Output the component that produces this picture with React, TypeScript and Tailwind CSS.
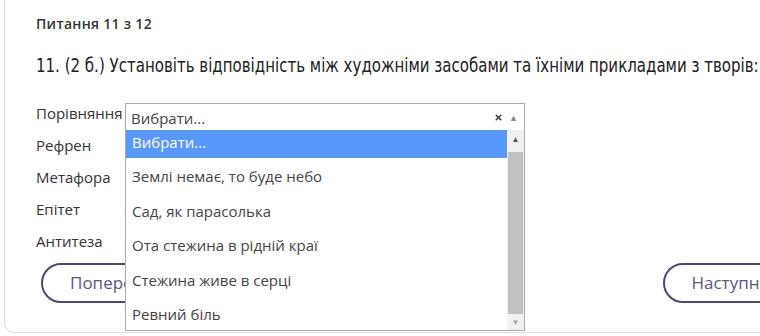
import { X } from "lucide-react"

const labels = ["Порівняння", "Рефрен", "Метафора", "Епітет", "Антитеза"]

const options = [
  "Вибрати...",
  "Землі немає, то буде небо",
  "Сад, як парасолька",
  "Ота стежина в рідній краї",
  "Стежина живе в серці",
  "Ревний біль",
]

function SelectBox() {
  return (
    <div className="flex h-[28px] w-[400px] items-center border border-[#aaaaaa] bg-white pl-[5px] pr-[6px] text-[15px] text-[#444]">
      <span className="flex-1 pt-[2px]">Вибрати...</span>
      <X className="mr-[6px] h-[9px] w-[9px] text-[#333]" strokeWidth={4} />
      <span className="pt-[1px] text-[9px] leading-none text-[#888]">▲</span>
    </div>
  )
}

function Dropdown() {
  return (
    <div className="absolute left-0 top-[27px] z-10 flex h-[201px] w-[400px] overflow-hidden border border-t-0 border-[#aaaaaa] bg-white">
      <div className="flex-1 overflow-hidden">
        <div className="mt-[-4px] flex flex-col">
          {options.map((o, i) => (
            <div
              key={o}
              className={
                i === 0
                  ? "flex h-[32px] items-center bg-[#5897fb] px-[6px] text-[15px] text-white"
                  : "flex h-[34.5px] items-center px-[6px] pt-[2px] text-[15px] text-[#444]"
              }
            >
              {o}
            </div>
          ))}
        </div>
      </div>
      <div className="flex w-[17px] flex-col items-center bg-[#f1f1f1]">
        <div className="flex h-[17px] items-center text-[8px] text-[#505050]">▲</div>
        <div className="mt-[5px] h-[162px] w-[15px] bg-[#c1c1c1]" />
        <div className="flex flex-1 items-center text-[8px] text-[#a3a3a3]">▼</div>
      </div>
    </div>
  )
}

function NavButton({ label }: { label: string }) {
  return (
    <button className="h-[40px] shrink-0 rounded-full border-2 border-[#4b4680] bg-white px-[27px] text-[17px] text-[#5b5680]">
      {label}
    </button>
  )
}

export default function App() {
  return (
    <div className="h-[336px] w-[760px] overflow-hidden bg-white font-['Open_Sans',sans-serif]">
      <div className="ml-[4px] h-[333px] w-[900px] rounded-bl-[10px] border-b border-l border-[#dcdcdc] pl-[31px] pt-[13px]">
        <div className="text-[14px] font-semibold tracking-[0.3px] text-[#333]">Питання 11 з 12</div>
        <div className="mt-[16px] origin-left scale-x-[0.835] whitespace-nowrap font-['DejaVu_Sans_Condensed',sans-serif] text-[20px] text-[#222]">
          11. (2 б.) Установіть відповідність між художніми засобами та їхніми прикладами з творів:
        </div>
        <div className="mt-[23px] flex flex-col gap-[4px]">
          {labels.map((l, i) => (
            <div key={l} className="flex h-[28px] items-start">
              <div className="w-[89px] text-[15px] leading-[20px] text-[#333]">{l}</div>
              <div className="relative">
                <SelectBox />
                {i === 0 && <Dropdown />}
              </div>
            </div>
          ))}
        </div>
        <div className="mt-[4px] flex w-[762px] justify-between pl-[5px]">
          <NavButton label="Попереднє" />
          <NavButton label="Наступне" />
        </div>
      </div>
    </div>
  )
}
